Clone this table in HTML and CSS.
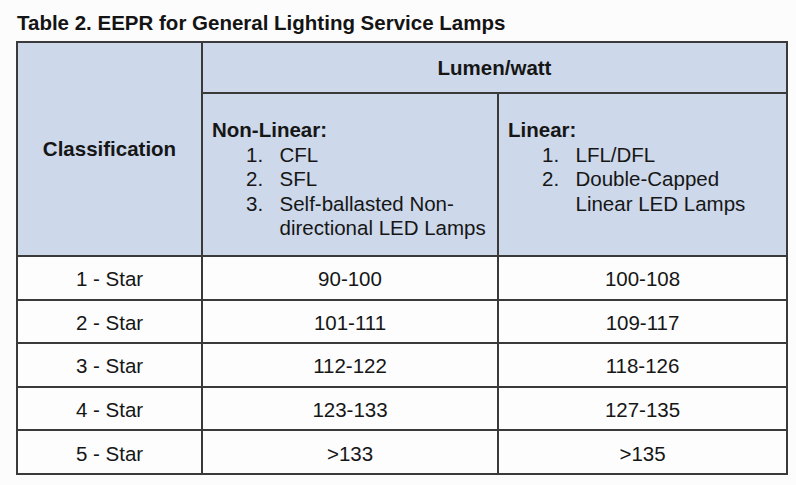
FILE: index.html
```html
<!DOCTYPE html>
<html lang="en">
<head>
<meta charset="utf-8">
<title>Table 2. EEPR for General Lighting Service Lamps</title>
<link rel="stylesheet" href="styles.css">
</head>
<body>
<main class="page">
  <h1 class="caption">Table 2. EEPR for General Lighting Service Lamps</h1>
  <table class="eepr">
    <colgroup>
      <col class="c1">
      <col class="c2">
      <col class="c3">
    </colgroup>
    <thead>
      <tr class="h1row">
        <th class="classif" rowspan="2">Classification</th>
        <th class="lumen" colspan="2">Lumen/watt</th>
      </tr>
      <tr class="h2row">
        <th class="group">
          <div class="label">Non-Linear:</div>
          <ol class="items">
            <li><span class="num">1.</span><span class="txt">CFL</span></li>
            <li><span class="num">2.</span><span class="txt">SFL</span></li>
            <li><span class="num">3.</span><span class="txt">Self-ballasted Non-directional LED Lamps</span></li>
          </ol>
        </th>
        <th class="group">
          <div class="label">Linear:</div>
          <ol class="items">
            <li><span class="num">1.</span><span class="txt">LFL/DFL</span></li>
            <li><span class="num">2.</span><span class="txt">Double-Capped Linear LED Lamps</span></li>
          </ol>
        </th>
      </tr>
    </thead>
    <tbody>
      <tr><td>1 - Star</td><td>90-100</td><td>100-108</td></tr>
      <tr><td>2 - Star</td><td>101-111</td><td>109-117</td></tr>
      <tr><td>3 - Star</td><td>112-122</td><td>118-126</td></tr>
      <tr><td>4 - Star</td><td>123-133</td><td>127-135</td></tr>
      <tr><td>5 - Star</td><td>&gt;133</td><td>&gt;135</td></tr>
    </tbody>
  </table>
</main>
</body>
</html>
```

FILE: styles.css
```css
html, body {
  margin: 0;
  padding: 0;
  background: #fcfcfc;
}

body {
  font-family: "Liberation Sans", Arial, sans-serif;
  font-size: 20.5px;
  color: #161616;
}

.page {
  padding: 11px 0 0 16px;
}

.caption {
  margin: 0 0 6px 1px;
  font-size: 20.5px;
  line-height: 24px;
  font-weight: bold;
  color: #141414;
}

.eepr {
  border-collapse: collapse;
  table-layout: fixed;
  width: 770px;
}

.c1 { width: 185px; }
.c2 { width: 296px; }
.c3 { width: 289px; }

.eepr th,
.eepr td {
  border: 2px solid #3a3a3a;
  padding: 0;
}

.eepr th {
  background: #cdd8ea;
  font-weight: bold;
}

.eepr .h1row { height: 51px; }
.eepr .h2row { height: 163px; }

.eepr .classif,
.eepr .lumen {
  text-align: center;
  vertical-align: middle;
  line-height: 24px;
}

.eepr .group {
  text-align: left;
  vertical-align: top;
  padding: 24px 10px 0 9px;
  line-height: 24.5px;
}

.label {
  font-weight: bold;
}

.items {
  list-style: none;
  margin: 0;
  padding: 0 0 0 34px;
  font-weight: normal;
}

.items li {
  display: flex;
}

.num {
  flex: 0 0 33.5px;
}

.txt {
  flex: 1 1 auto;
}

.eepr tbody tr {
  height: 43.6px;
}

.eepr td {
  background: #fdfdfd;
  text-align: center;
  vertical-align: middle;
  line-height: 24px;
  padding-top: 3px;
}
```
